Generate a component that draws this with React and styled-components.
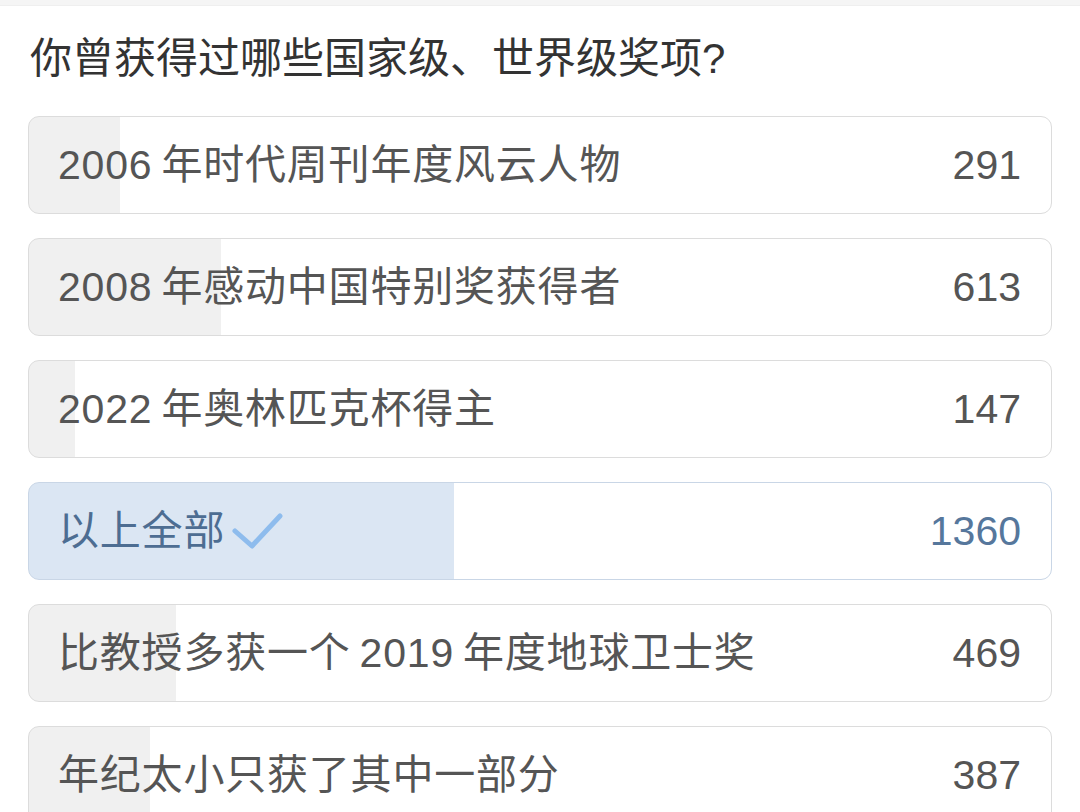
import React from "react";
import styled, { createGlobalStyle } from "styled-components";

const Global = createGlobalStyle`
  html, body { margin: 0; padding: 0; background: #ffffff; }
  body { font-family: "Liberation Sans", "Noto Sans CJK SC", sans-serif; }
`;

const Page = styled.div`
  width: 1080px;
  height: 812px;
  overflow: hidden;
  background: #ffffff;
  display: flex;
  flex-direction: column;
`;

const TopBand = styled.div`
  height: 5px;
  background: #f5f5f5;
  border-bottom: 1px solid #efefef;
  flex-shrink: 0;
`;

const Title = styled.h1`
  margin: 0;
  padding: 28px 0 0 30px;
  font-size: 42px;
  line-height: 50px;
  font-weight: 400;
  color: #333333;
`;

const List = styled.div`
  display: flex;
  flex-direction: column;
  gap: 24px;
  padding: 32px 28px 0 28px;
`;

const Row = styled.div`
  height: 98px;
  box-sizing: border-box;
  border: 1.5px solid ${(p) => (p.$selected ? "#c9d6e6" : "#dcdcdc")};
  border-radius: 11px;
  display: flex;
  align-items: center;
  justify-content: space-between;
  padding: 0 30px 0 29px;
  background: linear-gradient(
    to right,
    ${(p) => (p.$selected ? "#dbe6f3" : "#f0f0f0")} 0%,
    ${(p) => (p.$selected ? "#dbe6f3" : "#f0f0f0")} ${(p) => p.$pct}%,
    #ffffff ${(p) => p.$pct}%,
    #ffffff 100%
  );
`;

const Label = styled.span`
  display: flex;
  align-items: center;
  gap: 7px;
  font-size: 41px;
  letter-spacing: 0.8px;
  line-height: 1;
  color: ${(p) => (p.$selected ? "#4d6d92" : "#555555")};
`;

const Count = styled.span`
  font-size: 41px;
  line-height: 1;
  color: ${(p) => (p.$selected ? "#56779c" : "#555555")};
`;

const Check = () => (
  <svg width="52" height="40" viewBox="0 0 52 40" fill="none">
    <path
      d="M3 20 L20 35 L48 5"
      stroke="#8ebced"
      strokeWidth="5"
      strokeLinecap="round"
      strokeLinejoin="round"
    />
  </svg>
);

const options = [
  { label: "2006\u2009年时代周刊年度风云人物", count: 291 },
  { label: "2008\u2009年感动中国特别奖获得者", count: 613 },
  { label: "2022\u2009年奥林匹克杯得主", count: 147 },
  { label: "以上全部", count: 1360, selected: true },
  { label: "比教授多获一个\u20092019\u2009年度地球卫士奖", count: 469 },
  { label: "年纪太小只获了其中一部分", count: 387 },
];

const total = options.reduce((s, o) => s + o.count, 0);

export default function App() {
  return (
    <Page>
      <Global />
      <TopBand />
      <Title>你曾获得过哪些国家级、世界级奖项?</Title>
      <List>
        {options.map((o) => (
          <Row key={o.label} $selected={o.selected} $pct={(o.count / total) * 100}>
            <Label $selected={o.selected}>
              {o.label}
              {o.selected && <Check />}
            </Label>
            <Count $selected={o.selected}>{o.count}</Count>
          </Row>
        ))}
      </List>
    </Page>
  );
}
